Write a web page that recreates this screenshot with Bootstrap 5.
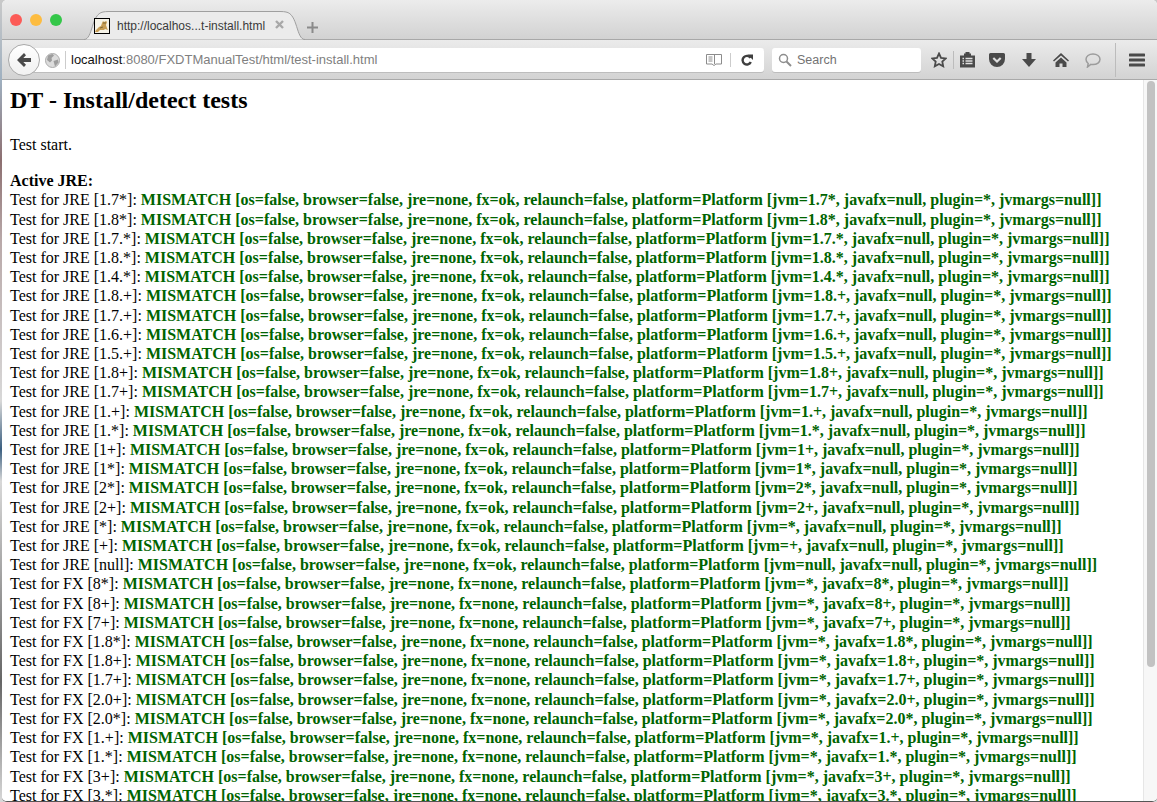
<!DOCTYPE html>
<html lang="en">
<head>
<meta charset="utf-8">
<title>DT - Install/detect tests</title>
<link href="https://cdn.jsdelivr.net/npm/bootstrap@5.3.0/dist/css/bootstrap.min.css" rel="stylesheet">
<style>
html,body{height:100%;margin:0;overflow:hidden}
body{background:linear-gradient(#c9c9c9 0,#9fb0c0 10%,#8c6f70 20%,#b9a9a9 30%,#d8d8d8 50%,#3b5f80 56%,#d8d8d8 60%,#666 85%,#d8d8d8 100%)}
.win{height:802px;width:1155px;margin-left:2px;font-family:"Liberation Sans",Arial,sans-serif;border-radius:5px 5px 5px 5px;overflow:hidden;background:#fff;border-bottom:1px solid #555}
.tabstrip{height:40px;background:linear-gradient(#ececec,#d2d2d2);border-bottom:1px solid #a8a8a8;flex:none;position:relative}
.lights{gap:8px;padding:14px 0 0 8px;width:82px;flex:none}
.dot{width:12px;height:12px;border-radius:50%;display:block}
.tabshape{width:221px;height:29px;margin-top:11px;position:relative;flex:none}
.tabshape svg.bg{position:absolute;left:0;top:0}
.tabtext{position:absolute;left:33px;top:6px;font-size:12px;color:#3a3a3a;white-space:nowrap}
.tabfav{position:absolute;left:10px;top:7px}
.tabx{position:absolute;left:191px;top:9px}
.plus{margin:22px 0 0 2px}
.toolbar{height:40px;background:linear-gradient(#ebebeb,#d3d3d3);border-bottom:1px solid #a9a9a9;flex:none;position:relative}
.urlbar{position:absolute;left:22px;top:8px;width:740px;height:24px;background:#fff;border-radius:3px;box-shadow:0 1px 0 #bdbdbd}
.urltext{position:absolute;left:47px;top:4px;font-size:13px;line-height:16px;color:#808080;white-space:nowrap}
.urlhost{color:#111}
.backbtn{position:absolute;left:6px;top:4px;width:32px;height:32px;border-radius:50%;background:linear-gradient(#fff,#f1f1f1);border:1px solid #a9a9a9}
.globe{position:absolute;left:21px;top:5px}
.urlsep{position:absolute;left:41px;top:3px;width:1px;height:18px;background:#ccc}
.readersep{position:absolute;left:706px;top:5px;width:1px;height:14px;background:#ccc}
.searchbar{position:absolute;left:770px;top:8px;width:149px;height:24px;background:#fff;border-radius:3px;box-shadow:0 1px 0 #bdbdbd;font-size:12.5px;line-height:24px;color:#737373;padding-left:25px}
.ticon{position:absolute}
.tsep{position:absolute;width:1px;background:#bcbcbc}
.pagewrap{flex:1 1 auto;min-height:0;position:relative;overflow:hidden;background:#fff}
.pagebody{padding:7px 0 0 8px;font-family:"Liberation Serif","Times New Roman",serif;font-size:16px;line-height:19.2px;color:#000;white-space:nowrap}
.pagetitle{font-family:inherit;font-size:24px;font-weight:700;line-height:27px;margin:0 0 21px}
.startline{margin:0 0 18px}
.res{color:#006400;font-weight:700}
.lbl{font-weight:700;line-height:18.2px}
.scrolltrack{position:absolute;right:0;top:0;bottom:0;width:14px;background:#f7f7f7;border-left:1px solid #e6e6e6}
.scrollthumb{width:8px;height:586px;background:#c2c2c2;border-radius:4px;margin:1px 0 0 3px}
</style>
</head>
<body>
<div class="win d-flex flex-column">
  <div class="tabstrip d-flex">
    <div class="lights d-flex">
      <span class="dot" style="background:#fc5b57"></span>
      <span class="dot" style="background:#fdbc40"></span>
      <span class="dot" style="background:#34c749"></span>
    </div>
    <div class="tabshape">
      <svg class="bg" width="221" height="29" viewBox="0 0 221 29"><path d="M0 28.500C9 28.500 7 3 19 1Q21 .5 25 .5H196Q200 .5 202 1C214 3 212 28.500 221 28.500" fill="#ebebeb" stroke="#9f9f9f"/></svg>
      <svg class="tabfav" width="16" height="16" viewBox="0 0 16 16"><rect x=".5" y=".5" width="15" height="15" fill="#f6f3e8" stroke="#000"/><path d="M2 12l3-3 2-1 1-3 1-2 1 1 2-1 1 1-1 3 1 3 1 2-3-1-1 1-4 0-2 2-3 0z" fill="#c79d55"/><path d="M9 5h3M6 10l3-1" stroke="#6b5a2e" stroke-width=".8"/></svg>
      <span class="tabtext">http://localhos...t-install.html</span>
      <svg class="tabx" width="9" height="9" viewBox="0 0 9 9"><path d="M1 1l7 7M8 1l-7 7" stroke="#a8a8a8" stroke-width="2.400"/></svg>
    </div>
    <svg class="plus" width="11" height="11" viewBox="0 0 11 11"><path d="M5.500 0v11M0 5.500h11" stroke="#8a8a8a" stroke-width="2"/></svg>
  </div>
  <div class="toolbar">
    <div class="urlbar">
      <svg class="globe" width="15" height="15" viewBox="0 0 15 15"><circle cx="7.500" cy="7.500" r="7" fill="#dcdcdc" stroke="#ababab"/><path d="M3 2.500l4.500-1.500 1.500 1.500L6.500 5l.5 2.500-2 2L2 7zM8.500 8l4.500-1.500.5 3-3.500 4z" fill="#9d9d9d"/></svg>
      <span class="urlsep"></span>
      <span class="urltext"><span class="urlhost">localhost</span>:8080/FXDTManualTest/html/test-install.html</span>
      <svg class="ticon" style="left:682px;top:6px" width="16" height="12" viewBox="0 0 16 12"><path d="M.5.5h15v9.500h-5.500L8 11.500 6 10H.5z" fill="#fff" stroke="#8c8c8c"/><path d="M2.500 3h4M2.500 5h4M2.500 7h4" stroke="#8c8c8c"/><path d="M8.500 1v9" stroke="#8c8c8c"/></svg>
      <span class="readersep"></span>
      <svg class="ticon" style="left:717px;top:6px" width="12" height="12" viewBox="0 0 12 12"><path d="M9.500 3.800A4.300 4.300 0 1 0 9.800 8" fill="none" stroke="#3f3f3f" stroke-width="2.400"/><path d="M6.500 .5h5.500v5.500z" fill="#3f3f3f"/></svg>
    </div>
    <div class="backbtn d-flex align-items-center justify-content-center">
      <svg width="14" height="14" viewBox="0 0 14 14"><path d="M7 0L0 7l7 7 2-2.200L6.300 9H14V5H6.300L9 2.200z" fill="#4a4a4a"/></svg>
    </div>
    <div class="searchbar">
      <svg class="ticon" style="left:6px;top:5px" width="14" height="14" viewBox="0 0 14 14"><circle cx="5.500" cy="5.500" r="4" fill="none" stroke="#8d8d8d" stroke-width="1.500"/><path d="M8.500 8.500L13 13" stroke="#8d8d8d" stroke-width="2"/></svg>
      Search
    </div>
    <svg class="ticon" style="left:929px;top:12px" width="16" height="16" viewBox="0 0 16 16"><path d="M8 1.500l2 4.300 4.700.6-3.400 3.200.9 4.700L8 12l-4.200 2.300.9-4.700L1.300 6.400 6 5.800z" fill="none" stroke="#4a4a4a" stroke-width="1.800"/></svg>
    <span class="tsep" style="left:951px;top:11px;height:18px"></span>
    <svg class="ticon" style="left:958px;top:12px" width="15" height="16" viewBox="0 0 15 16"><path d="M0 3.500h4V1.500h1.500V0h4v1.500H11v2h4V15.500H0z" fill="#4a4a4a"/><path d="M2.500 6.500h1.500M5.500 6.500h7M2.500 9h1.500M5.500 9h7M2.500 11.500h1.500M5.500 11.500h7" stroke="#e0e0e0" stroke-width="1.300"/></svg>
    <svg class="ticon" style="left:987px;top:13px" width="16" height="14" viewBox="0 0 16 14"><path d="M1.500 0h13A1.500 1.500 0 0 1 16 1.500V6a8 8 0 0 1-16 0V1.500A1.500 1.500 0 0 1 1.500 0z" fill="#4a4a4a"/><path d="M4.300 5L8 8.500 11.700 5" fill="none" stroke="#dedede" stroke-width="2.200"/></svg>
    <svg class="ticon" style="left:1020px;top:13px" width="14" height="14" viewBox="0 0 14 14"><path d="M4.500 0h5v6H14l-7 8-7-8h4.500z" fill="#4a4a4a"/></svg>
    <svg class="ticon" style="left:1051px;top:13px" width="16" height="14" viewBox="0 0 16 14"><path d="M8 0l8 7.500-1 1L8 2.500 1 8.500l-1-1zM8 4.500l5.500 5V14H9.500v-3.500h-3V14H2.500V9.500z" fill="#4a4a4a"/></svg>
    <svg class="ticon" style="left:1083px;top:13px" width="16" height="15" viewBox="0 0 16 15"><path d="M8 1c4 0 7 2.300 7 5.300s-3 5.300-7 5.300c-.8 0-1.500 0-2.200-.2L2.500 14l.7-3.500C1.800 9.500 1 8 1 6.300 1 3.300 4 1 8 1z" fill="none" stroke="#9c9c9c" stroke-width="1.500"/></svg>
    <span class="tsep" style="left:1113px;top:3px;height:34px"></span>
    <svg class="ticon" style="left:1127px;top:13px" width="16" height="14" viewBox="0 0 16 14"><path d="M1 2h14M1 7h14M1 12h14" stroke="#4a4a4a" stroke-width="3" stroke-linecap="round"/></svg>
  </div>
  <div class="pagewrap">
    <div class="pagebody">
      <h1 class="pagetitle">DT - Install/detect tests</h1>
      <p class="startline">Test start.</p>
      <div class="lbl">Active JRE:</div>
      <div>Test for JRE [1.7*]: <span class="res">MISMATCH [os=false, browser=false, jre=none, fx=ok, relaunch=false, platform=Platform [jvm=1.7*, javafx=null, plugin=*, jvmargs=null]]</span></div>
      <div>Test for JRE [1.8*]: <span class="res">MISMATCH [os=false, browser=false, jre=none, fx=ok, relaunch=false, platform=Platform [jvm=1.8*, javafx=null, plugin=*, jvmargs=null]]</span></div>
      <div>Test for JRE [1.7.*]: <span class="res">MISMATCH [os=false, browser=false, jre=none, fx=ok, relaunch=false, platform=Platform [jvm=1.7.*, javafx=null, plugin=*, jvmargs=null]]</span></div>
      <div>Test for JRE [1.8.*]: <span class="res">MISMATCH [os=false, browser=false, jre=none, fx=ok, relaunch=false, platform=Platform [jvm=1.8.*, javafx=null, plugin=*, jvmargs=null]]</span></div>
      <div>Test for JRE [1.4.*]: <span class="res">MISMATCH [os=false, browser=false, jre=none, fx=ok, relaunch=false, platform=Platform [jvm=1.4.*, javafx=null, plugin=*, jvmargs=null]]</span></div>
      <div>Test for JRE [1.8.+]: <span class="res">MISMATCH [os=false, browser=false, jre=none, fx=ok, relaunch=false, platform=Platform [jvm=1.8.+, javafx=null, plugin=*, jvmargs=null]]</span></div>
      <div>Test for JRE [1.7.+]: <span class="res">MISMATCH [os=false, browser=false, jre=none, fx=ok, relaunch=false, platform=Platform [jvm=1.7.+, javafx=null, plugin=*, jvmargs=null]]</span></div>
      <div>Test for JRE [1.6.+]: <span class="res">MISMATCH [os=false, browser=false, jre=none, fx=ok, relaunch=false, platform=Platform [jvm=1.6.+, javafx=null, plugin=*, jvmargs=null]]</span></div>
      <div>Test for JRE [1.5.+]: <span class="res">MISMATCH [os=false, browser=false, jre=none, fx=ok, relaunch=false, platform=Platform [jvm=1.5.+, javafx=null, plugin=*, jvmargs=null]]</span></div>
      <div>Test for JRE [1.8+]: <span class="res">MISMATCH [os=false, browser=false, jre=none, fx=ok, relaunch=false, platform=Platform [jvm=1.8+, javafx=null, plugin=*, jvmargs=null]]</span></div>
      <div>Test for JRE [1.7+]: <span class="res">MISMATCH [os=false, browser=false, jre=none, fx=ok, relaunch=false, platform=Platform [jvm=1.7+, javafx=null, plugin=*, jvmargs=null]]</span></div>
      <div>Test for JRE [1.+]: <span class="res">MISMATCH [os=false, browser=false, jre=none, fx=ok, relaunch=false, platform=Platform [jvm=1.+, javafx=null, plugin=*, jvmargs=null]]</span></div>
      <div>Test for JRE [1.*]: <span class="res">MISMATCH [os=false, browser=false, jre=none, fx=ok, relaunch=false, platform=Platform [jvm=1.*, javafx=null, plugin=*, jvmargs=null]]</span></div>
      <div>Test for JRE [1+]: <span class="res">MISMATCH [os=false, browser=false, jre=none, fx=ok, relaunch=false, platform=Platform [jvm=1+, javafx=null, plugin=*, jvmargs=null]]</span></div>
      <div>Test for JRE [1*]: <span class="res">MISMATCH [os=false, browser=false, jre=none, fx=ok, relaunch=false, platform=Platform [jvm=1*, javafx=null, plugin=*, jvmargs=null]]</span></div>
      <div>Test for JRE [2*]: <span class="res">MISMATCH [os=false, browser=false, jre=none, fx=ok, relaunch=false, platform=Platform [jvm=2*, javafx=null, plugin=*, jvmargs=null]]</span></div>
      <div>Test for JRE [2+]: <span class="res">MISMATCH [os=false, browser=false, jre=none, fx=ok, relaunch=false, platform=Platform [jvm=2+, javafx=null, plugin=*, jvmargs=null]]</span></div>
      <div>Test for JRE [*]: <span class="res">MISMATCH [os=false, browser=false, jre=none, fx=ok, relaunch=false, platform=Platform [jvm=*, javafx=null, plugin=*, jvmargs=null]]</span></div>
      <div>Test for JRE [+]: <span class="res">MISMATCH [os=false, browser=false, jre=none, fx=ok, relaunch=false, platform=Platform [jvm=+, javafx=null, plugin=*, jvmargs=null]]</span></div>
      <div>Test for JRE [null]: <span class="res">MISMATCH [os=false, browser=false, jre=none, fx=ok, relaunch=false, platform=Platform [jvm=null, javafx=null, plugin=*, jvmargs=null]]</span></div>
      <div>Test for FX [8*]: <span class="res">MISMATCH [os=false, browser=false, jre=none, fx=none, relaunch=false, platform=Platform [jvm=*, javafx=8*, plugin=*, jvmargs=null]]</span></div>
      <div>Test for FX [8+]: <span class="res">MISMATCH [os=false, browser=false, jre=none, fx=none, relaunch=false, platform=Platform [jvm=*, javafx=8+, plugin=*, jvmargs=null]]</span></div>
      <div>Test for FX [7+]: <span class="res">MISMATCH [os=false, browser=false, jre=none, fx=none, relaunch=false, platform=Platform [jvm=*, javafx=7+, plugin=*, jvmargs=null]]</span></div>
      <div>Test for FX [1.8*]: <span class="res">MISMATCH [os=false, browser=false, jre=none, fx=none, relaunch=false, platform=Platform [jvm=*, javafx=1.8*, plugin=*, jvmargs=null]]</span></div>
      <div>Test for FX [1.8+]: <span class="res">MISMATCH [os=false, browser=false, jre=none, fx=none, relaunch=false, platform=Platform [jvm=*, javafx=1.8+, plugin=*, jvmargs=null]]</span></div>
      <div>Test for FX [1.7+]: <span class="res">MISMATCH [os=false, browser=false, jre=none, fx=none, relaunch=false, platform=Platform [jvm=*, javafx=1.7+, plugin=*, jvmargs=null]]</span></div>
      <div>Test for FX [2.0+]: <span class="res">MISMATCH [os=false, browser=false, jre=none, fx=none, relaunch=false, platform=Platform [jvm=*, javafx=2.0+, plugin=*, jvmargs=null]]</span></div>
      <div>Test for FX [2.0*]: <span class="res">MISMATCH [os=false, browser=false, jre=none, fx=none, relaunch=false, platform=Platform [jvm=*, javafx=2.0*, plugin=*, jvmargs=null]]</span></div>
      <div>Test for FX [1.+]: <span class="res">MISMATCH [os=false, browser=false, jre=none, fx=none, relaunch=false, platform=Platform [jvm=*, javafx=1.+, plugin=*, jvmargs=null]]</span></div>
      <div>Test for FX [1.*]: <span class="res">MISMATCH [os=false, browser=false, jre=none, fx=none, relaunch=false, platform=Platform [jvm=*, javafx=1.*, plugin=*, jvmargs=null]]</span></div>
      <div>Test for FX [3+]: <span class="res">MISMATCH [os=false, browser=false, jre=none, fx=none, relaunch=false, platform=Platform [jvm=*, javafx=3+, plugin=*, jvmargs=null]]</span></div>
      <div>Test for FX [3.*]: <span class="res">MISMATCH [os=false, browser=false, jre=none, fx=none, relaunch=false, platform=Platform [jvm=*, javafx=3.*, plugin=*, jvmargs=null]]</span></div>
    </div>
    <div class="scrolltrack"><div class="scrollthumb"></div></div>
  </div>
</div>
<script src="https://cdn.jsdelivr.net/npm/bootstrap@5.3.0/dist/js/bootstrap.bundle.min.js"></script>
</body>
</html>
